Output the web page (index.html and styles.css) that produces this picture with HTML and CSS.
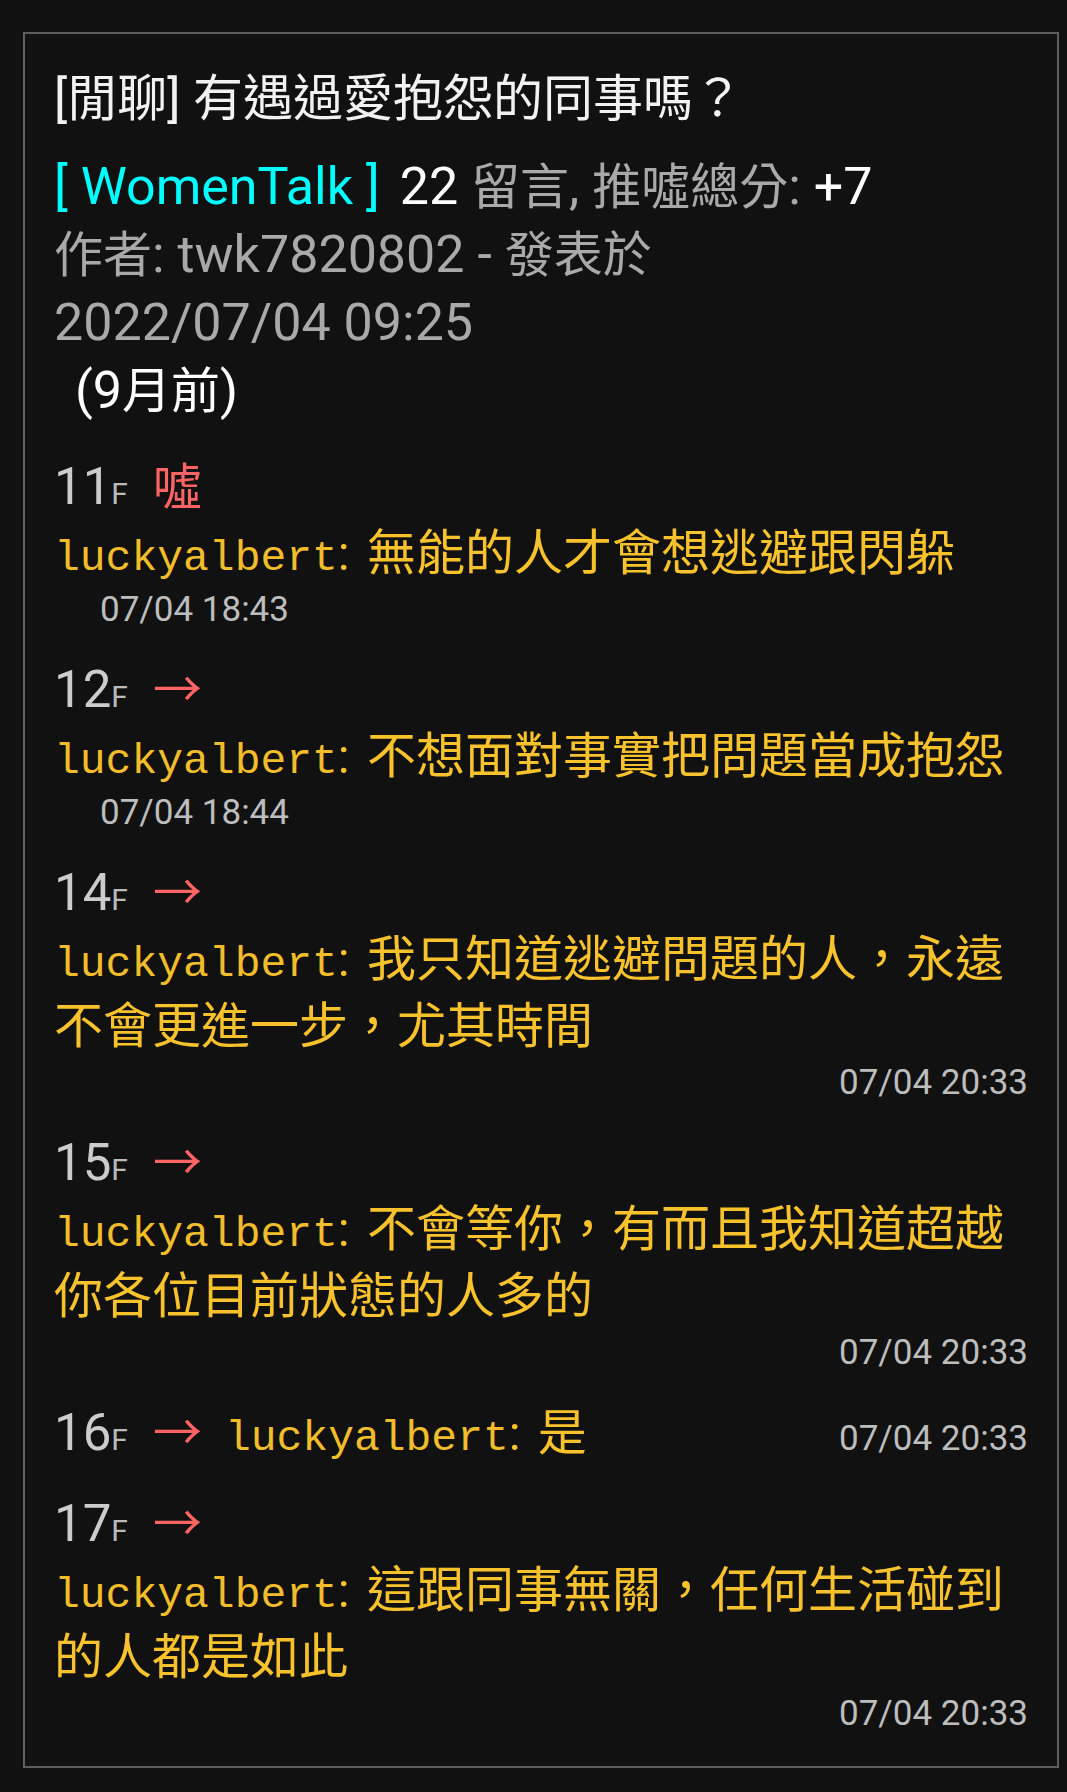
FILE: index.html
```html
<!DOCTYPE html>
<html lang="zh-Hant">
<head>
<meta charset="utf-8">
<title>[閒聊] 有遇過愛抱怨的同事嗎？</title>
<link rel="stylesheet" href="styles.css">
</head>
<body>
<div class="post">
  <h1 class="title">[閒聊] 有遇過愛抱怨的同事嗎？</h1>
  <div class="meta">
    <div class="meta-line"><span class="board">[ WomenTalk ]</span><span class="num">22</span> <span class="zh">留言</span>, <span class="zh">推噓總分</span>: <span class="score">+7</span></div>
    <div class="meta-line"><span class="zh">作者</span>: twk7820802 - <span class="zh">發表於</span></div>
    <div class="meta-line date">2022/07/04 09:25</div>
    <div class="meta-line ago">(9<span class="zh">月前</span>)</div>
  </div>
  <div class="pushes">
    <div class="push">
      <div class="push-head"><span class="floor">11<span class="floor-f">F</span></span><span class="tag">噓</span></div>
      <div class="push-body"><span class="user">luckyalbert</span><span class="colon">:</span> 無能的人才會想逃避跟閃躲</div>
      <div class="time time-indent">07/04 18:43</div>
    </div>
    <div class="push">
      <div class="push-head"><span class="floor">12<span class="floor-f">F</span></span><span class="tag">→</span></div>
      <div class="push-body"><span class="user">luckyalbert</span><span class="colon">:</span> 不想面對事實把問題當成抱怨</div>
      <div class="time time-indent">07/04 18:44</div>
    </div>
    <div class="push">
      <div class="push-head"><span class="floor">14<span class="floor-f">F</span></span><span class="tag">→</span></div>
      <div class="push-body"><span class="user">luckyalbert</span><span class="colon">:</span> 我只知道逃避問題的人，永遠不會更進一步，尤其時間</div>
      <div class="time time-right">07/04 20:33</div>
    </div>
    <div class="push">
      <div class="push-head"><span class="floor">15<span class="floor-f">F</span></span><span class="tag">→</span></div>
      <div class="push-body"><span class="user">luckyalbert</span><span class="colon">:</span> 不會等你，有而且我知道超越你各位目前狀態的人多的</div>
      <div class="time time-right">07/04 20:33</div>
    </div>
    <div class="push push-inline">
      <div class="push-head"><span class="floor">16<span class="floor-f">F</span></span><span class="tag">→</span></div>
      <div class="push-body push-body-inline"><span class="user">luckyalbert</span><span class="colon">:</span> 是</div>
      <div class="time time-inline">07/04 20:33</div>
    </div>
    <div class="push">
      <div class="push-head"><span class="floor">17<span class="floor-f">F</span></span><span class="tag">→</span></div>
      <div class="push-body"><span class="user">luckyalbert</span><span class="colon">:</span> 這跟同事無關，任何生活碰到的人都是如此</div>
      <div class="time time-right">07/04 20:33</div>
    </div>
  </div>
</div>
</body>
</html>
```

FILE: styles.css
```css
html, body {
  margin: 0;
  padding: 0;
  background: #111111;
}

body {
  font-family: Roboto, "Noto Sans CJK TC", sans-serif;
  color: #a9a9a9;
  padding: 32px 8px 24px 23px;
}

.post {
  border: 2px solid #5e5e5e;
  padding: 33px 29px 30px 29px;
  background: #111111;
}

.title {
  margin: 0 0 22px 0;
  font-size: 50px;
  line-height: 64px;
  font-weight: 400;
  color: #f2f2f2;
}

.meta-line {
  font-size: 52px;
  line-height: 68px;
  color: #a9a9a9;
  white-space: nowrap;
}

.zh {
  font-size: 49px;
  line-height: 1;
}

.board {
  color: #00ffff;
  margin-right: 20px;
}

.num,
.score {
  color: #ffffff;
}

.ago {
  color: #ffffff;
  padding-left: 21px;
}

.pushes {
  margin-top: 28px;
  display: flex;
  flex-direction: column;
  gap: 24px;
}

.push-head {
  display: flex;
  align-items: baseline;
  font-size: 50px;
  line-height: 67px;
}

.floor {
  color: #cccccc;
  font-size: 51px;
}

.floor-f {
  font-size: 30px;
  line-height: 1;
  color: #bbbbbb;
}

.tag {
  margin-left: 25px;
  font-size: 49px;
  line-height: 1;
  color: #ff6464;
}

.push-body {
  font-size: 49px;
  line-height: 67px;
  color: #f8c22c;
}

.user {
  font-family: "Liberation Mono", monospace;
  font-size: 43px;
  line-height: 1;
  color: #f2bd2a;
}

.colon {
  margin-right: 5px;
}

.time {
  font-size: 35px;
  line-height: 45px;
  color: #bdbdbd;
}

.time-indent {
  padding-left: 46px;
}

.time-right {
  text-align: right;
}

.push-inline {
  display: flex;
  align-items: baseline;
  height: 67px;
}

.push-body-inline {
  margin-left: 23px;
}

.time-inline {
  margin-left: auto;
  line-height: 1;
}
```
